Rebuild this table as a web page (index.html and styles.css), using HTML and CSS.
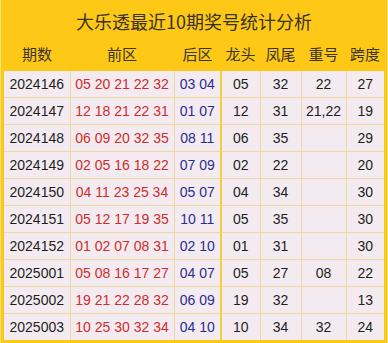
FILE: index.html
```html
<!DOCTYPE html>
<html lang="zh">
<head>
<meta charset="utf-8">
<link rel="stylesheet" href="styles.css">
</head>
<body>
<div class="board">
  <div class="title">大乐透最近10期奖号统计分析</div>
  <table class="grid">
    <colgroup>
      <col class="c-qi"><col class="c-front"><col class="c-back"><col class="c-head"><col class="c-tail"><col class="c-rep"><col class="c-span">
    </colgroup>
    <thead>
      <tr><th>期数</th><th>前区</th><th class="sep">后区</th><th>龙头</th><th>凤尾</th><th>重号</th><th>跨度</th></tr>
    </thead>
    <tbody>
      <tr><td>2024146</td><td class="red">05 20 21 22 32</td><td class="blue sep">03 04</td><td>05</td><td>32</td><td>22</td><td>27</td></tr>
      <tr><td>2024147</td><td class="red">12 18 21 22 31</td><td class="blue sep">01 07</td><td>12</td><td>31</td><td>21,22</td><td>19</td></tr>
      <tr><td>2024148</td><td class="red">06 09 20 32 35</td><td class="blue sep">08 11</td><td>06</td><td>35</td><td></td><td>29</td></tr>
      <tr><td>2024149</td><td class="red">02 05 16 18 22</td><td class="blue sep">07 09</td><td>02</td><td>22</td><td></td><td>20</td></tr>
      <tr><td>2024150</td><td class="red">04 11 23 25 34</td><td class="blue sep">05 07</td><td>04</td><td>34</td><td></td><td>30</td></tr>
      <tr><td>2024151</td><td class="red">05 12 17 19 35</td><td class="blue sep">10 11</td><td>05</td><td>35</td><td></td><td>30</td></tr>
      <tr><td>2024152</td><td class="red">01 02 07 08 31</td><td class="blue sep">02 10</td><td>01</td><td>31</td><td></td><td>30</td></tr>
      <tr><td>2025001</td><td class="red">05 08 16 17 27</td><td class="blue sep">04 07</td><td>05</td><td>27</td><td>08</td><td>22</td></tr>
      <tr><td>2025002</td><td class="red">19 21 22 28 32</td><td class="blue sep">06 09</td><td>19</td><td>32</td><td></td><td>13</td></tr>
      <tr><td>2025003</td><td class="red">10 25 30 32 34</td><td class="blue sep">04 10</td><td>10</td><td>34</td><td>32</td><td>24</td></tr>
    </tbody>
  </table>
</div>
</body>
</html>
```
FILE: styles.css
```css
html, body {
  margin: 0;
  padding: 0;
  background: #ffffff;
}
.board {
  width: 388px;
  height: 343px;
  box-sizing: border-box;
  background: #fdc916;
  padding: 0 3px 3px 3px;
  border-left: 1px solid #fbe27a;
  border-right: 1px solid #fbe27a;
}
.title {
  height: 38px;
  display: flex;
  align-items: center;
  justify-content: center;
  padding-top: 4px;
  box-sizing: border-box;
  font-family: "Noto Sans CJK SC", "Noto Sans", sans-serif;
  font-size: 18px;
  color: #3a3220;
}
.grid {
  width: 380px;
  border-collapse: collapse;
  table-layout: fixed;
  font-family: "Liberation Sans", "Noto Sans CJK SC", sans-serif;
  font-size: 14px;
}
.c-qi { width: 66px; }
.c-front { width: 104px; }
.c-back { width: 47px; }
.c-head { width: 39px; }
.c-tail { width: 41px; }
.c-rep { width: 45px; }
.c-span { width: 38px; }
.grid th {
  height: 31px;
  padding: 0;
  font-family: "Noto Sans CJK SC", "Noto Sans", sans-serif;
  font-weight: normal;
  font-size: 15px;
  color: #3b3424;
  text-align: center;
  vertical-align: middle;
  padding-bottom: 2px;
}
.grid td {
  height: 26px;
  padding: 0;
  background: #f3ebef;
  border: 1px solid #eed8a0;
  text-align: center;
  vertical-align: middle;
  color: #1e1e1e;
  white-space: nowrap;
}
.grid tbody tr:first-child td {
  border-top: none;
}
.grid td:first-child {
  border-left: none;
}
.grid td:last-child {
  border-right: none;
}
.grid tbody tr:last-child td {
  border-bottom: none;
}
.grid td.red {
  color: #cf2d2d;
}
.grid td.blue {
  color: #2b2b95;
}
.grid td.sep {
  border-right: 2px solid #f3d03a;
}
```
